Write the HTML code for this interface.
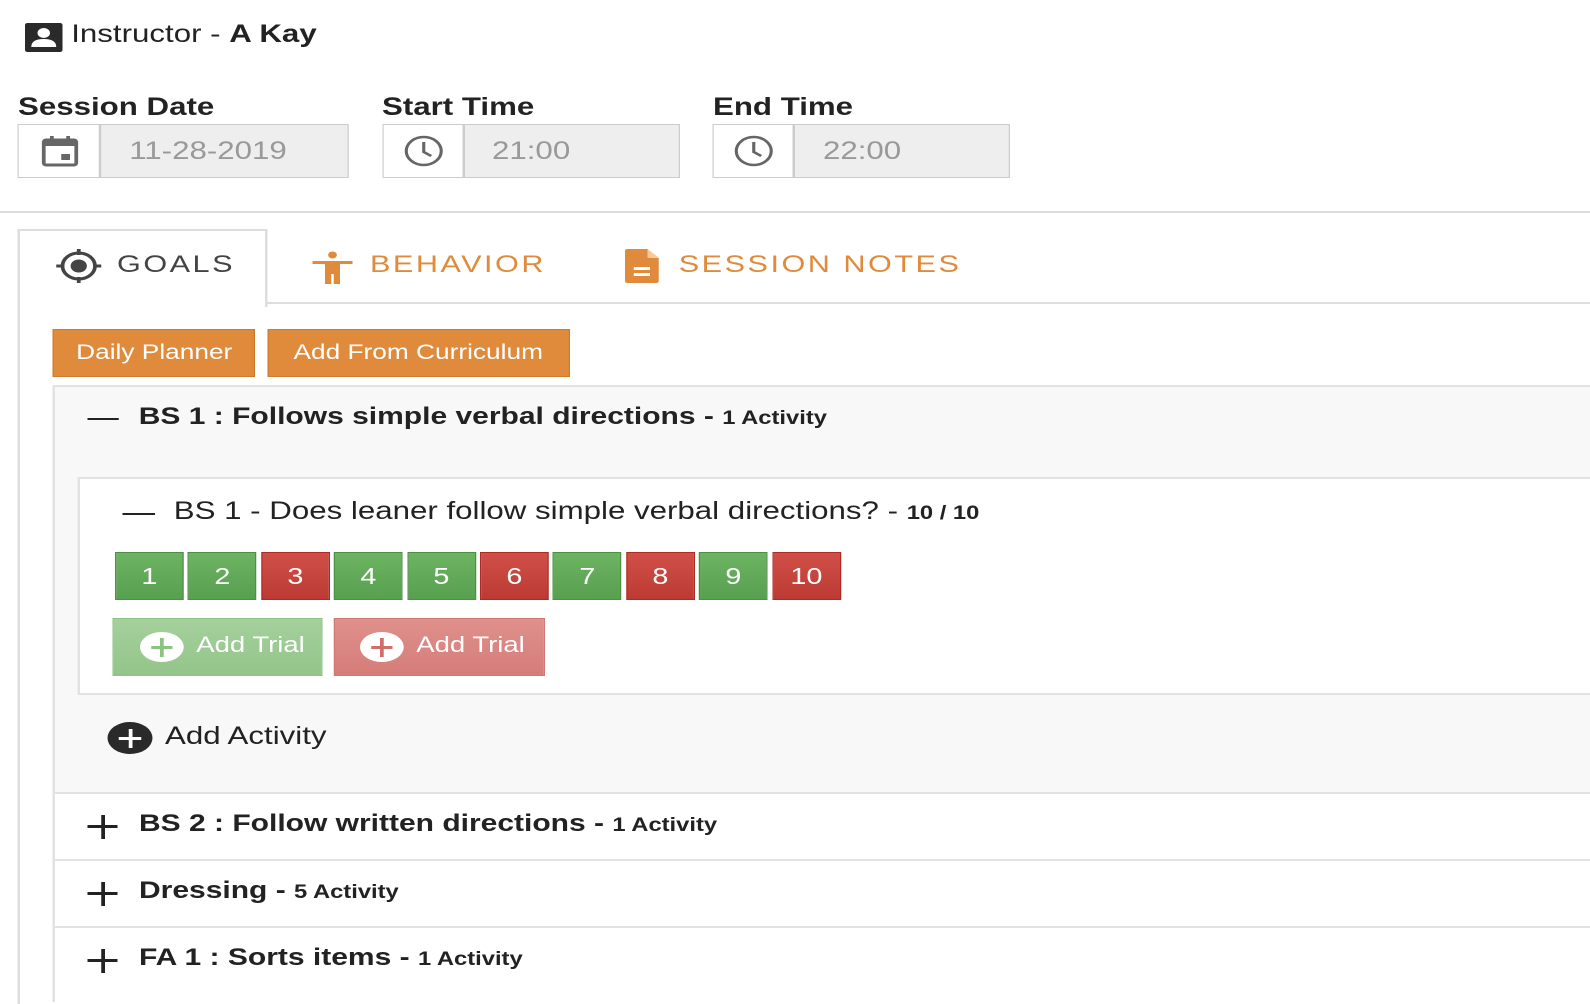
<!DOCTYPE html>
<html><head><meta charset="utf-8"><style>
html,body{margin:0;padding:0;background:#fff;overflow:hidden;width:1590px;height:1000px}
#w{position:absolute;left:0;top:0;width:1272px;height:1000px;transform:scaleX(1.25);transform-origin:0 0;font-family:"Liberation Sans",Arial,sans-serif;color:#222}
.a{position:absolute}
.lbl{font-weight:bold;font-size:25px;top:93px}
.inp{position:absolute;top:124px;height:52px;border:1px solid #ccc;background:#eee}
.inp .ic{position:absolute;left:0;top:0;bottom:0;background:#fff;border-right:2px solid #ccc}
.inp .v{position:absolute;top:12px;font-size:25px;color:#999}
.tab{font-size:24.5px;letter-spacing:2px;top:251px}
.btn{position:absolute;top:329px;height:46px;background:#e08b3c;border:1px solid #d07a2c;color:#fff;font-size:21px;line-height:46px;text-align:center}
.t{position:absolute;top:552px;width:53px;height:46px;color:#fff;font-size:23px;line-height:46px;text-align:center}
.g{background:linear-gradient(#6db462,#57a050);border:1px solid #4a9143}
.r{background:linear-gradient(#d05048,#bc3a33);border:1px solid #b02a24}
.row{position:absolute;left:42.4px;right:0;border-top:2px solid #e2e2e2;height:65px;background:#fff}
.row .ph{position:absolute;left:28px;top:31px;width:24px;height:3px;background:#222}
.row .pv{position:absolute;left:38.5px;top:21px;width:3px;height:24px;background:#222}
.row .tx{position:absolute;left:68.8px;top:16px;font-size:24px;font-weight:bold}
small{font-size:19px}
</style></head><body><div id="w">
<svg class="a" style="left:19px;top:22px" width="32" height="31" viewBox="0 0 32 31"><rect x="1" y="1" width="30" height="29" rx="2" fill="#2a2a2a"/><circle cx="16" cy="11" r="5" fill="#fff"/><path d="M6 25 Q6 17 16 17 Q26 17 26 25 Z" fill="#fff"/></svg>
<div class="a" style="left:57px;top:20px;font-size:25px">Instructor - <b>A Kay</b></div>

<div class="a lbl" style="left:14.4px">Session Date</div>
<div class="a lbl" style="left:305.6px">Start Time</div>
<div class="a lbl" style="left:570.4px">End Time</div>

<div class="inp" style="left:14.4px;width:263px"><div class="ic" style="width:64px"><svg style="position:absolute;left:18px;top:10px" width="30" height="32" viewBox="0 0 30 32"><rect x="2" y="5" width="26" height="25" rx="2" fill="none" stroke="#666" stroke-width="3"/><rect x="2" y="5" width="26" height="6" fill="#666"/><rect x="7" y="1" width="3" height="6" fill="#666"/><rect x="20" y="1" width="3" height="6" fill="#666"/><rect x="16" y="19" width="7" height="6" fill="#666"/></svg></div><div class="v" style="left:88px">11-28-2019</div></div>
<div class="inp" style="left:305.6px;width:236px"><div class="ic" style="width:63px"><svg style="position:absolute;left:14px;top:10px" width="36" height="32" viewBox="0 0 36 32"><circle cx="18" cy="16" r="14" fill="none" stroke="#666" stroke-width="2.5"/><path d="M18 7 V17 L24 21" fill="none" stroke="#666" stroke-width="2.5"/></svg></div><div class="v" style="left:87px">21:00</div></div>
<div class="inp" style="left:570.4px;width:236px"><div class="ic" style="width:63px"><svg style="position:absolute;left:14px;top:10px" width="36" height="32" viewBox="0 0 36 32"><circle cx="18" cy="16" r="14" fill="none" stroke="#666" stroke-width="2.5"/><path d="M18 7 V17 L24 21" fill="none" stroke="#666" stroke-width="2.5"/></svg></div><div class="v" style="left:87px">22:00</div></div>

<div class="a" style="left:0;right:0;top:211px;border-top:2px solid #ddd"></div>

<div class="a" style="left:14.4px;right:0;top:302px;height:700px;border-left:2px solid #ddd;border-top:2px solid #ddd"></div>
<div class="a" style="left:14.4px;top:229px;width:196px;height:76px;border:2px solid #ddd;border-bottom:none;background:#fff"></div>
<svg class="a" style="left:44px;top:248px" width="38" height="36" viewBox="0 0 38 36"><circle cx="19" cy="18" r="13" fill="none" stroke="#444" stroke-width="3"/><circle cx="19" cy="18" r="6.5" fill="#444"/><path d="M19 1v6M19 29v6M1 18h6M31 18h6" stroke="#444" stroke-width="3"/></svg>
<div class="a tab" style="left:93.6px;color:#444">GOALS</div>
<svg class="a" style="left:250px;top:251px" width="32" height="34" viewBox="0 0 32 34"><circle cx="16" cy="4" r="3.5" fill="#e08b3c"/><rect x="0" y="10" width="32" height="3" fill="#e08b3c"/><rect x="10" y="10" width="12" height="13" fill="#e08b3c"/><rect x="10" y="22" width="5" height="11" fill="#e08b3c"/><rect x="17" y="22" width="5" height="11" fill="#e08b3c"/></svg>
<div class="a tab" style="left:296px;color:#e08b3c">BEHAVIOR</div>
<svg class="a" style="left:499px;top:248px" width="29" height="36" viewBox="0 0 29 36"><path d="M3 1 H19 L28 10 V33 Q28 35 26 35 H3 Q1 35 1 33 V3 Q1 1 3 1Z" fill="#e08b3c"/><path d="M19 1 V10 H28" fill="#f5c99a"/><rect x="8" y="19" width="13" height="3" fill="#fff"/><rect x="8" y="25" width="13" height="3" fill="#fff"/></svg>
<div class="a tab" style="left:543px;color:#e08b3c">SESSION NOTES</div>

<div class="btn" style="left:42.4px;width:160px">Daily Planner</div>
<div class="btn" style="left:213.6px;width:240px">Add From Curriculum</div>

<div class="a" style="left:42.4px;right:0;top:385px;height:407px;background:#f8f8f8;border:2px solid #e2e2e2;border-right:none"></div>
<div class="a" style="left:70px;top:418px;width:25px;height:2px;background:#222"></div>
<div class="a" style="left:111px;top:403px;font-size:24px;font-weight:bold">BS 1 : Follows simple verbal directions - <small>1 Activity</small></div>

<div class="a" style="left:62.4px;right:0;top:477px;height:214px;background:#fff;border:2px solid #e2e2e2;border-right:none"></div>
<div class="a" style="left:98px;top:513px;width:26px;height:2px;background:#222"></div>
<div class="a" style="left:139px;top:497px;font-size:25px">BS 1 - Does leaner follow simple verbal directions? - <b><small>10 / 10</small></b></div>

<div class="t g" style="left:92px">1</div>
<div class="t g" style="left:150.4px">2</div>
<div class="t r" style="left:208.8px">3</div>
<div class="t g" style="left:267.2px">4</div>
<div class="t g" style="left:325.6px">5</div>
<div class="t r" style="left:384px">6</div>
<div class="t g" style="left:442.4px">7</div>
<div class="t r" style="left:500.8px">8</div>
<div class="t g" style="left:559.2px">9</div>
<div class="t r" style="left:617.6px">10</div>

<div class="a" style="left:90.4px;top:618px;width:166px;height:56px;background:linear-gradient(#a5d09c,#93c58a);border:1px solid #8fc286"></div>
<div class="a" style="left:112px;top:632px;width:35px;height:30px;border-radius:50%;background:#fff"></div>
<div class="a" style="left:121px;top:646px;width:17px;height:3px;background:#8cc383"></div>
<div class="a" style="left:128px;top:638px;width:3px;height:19px;background:#8cc383"></div>
<div class="a" style="left:157px;top:632px;color:#fff;font-size:22px">Add Trial</div>
<div class="a" style="left:267.2px;top:618px;width:167px;height:56px;background:linear-gradient(#e0908c,#d47d79);border:1px solid #d27773"></div>
<div class="a" style="left:288px;top:632px;width:35px;height:30px;border-radius:50%;background:#fff"></div>
<div class="a" style="left:297px;top:646px;width:17px;height:3px;background:#d26e6a"></div>
<div class="a" style="left:304px;top:638px;width:3px;height:19px;background:#d26e6a"></div>
<div class="a" style="left:333px;top:632px;color:#fff;font-size:22px">Add Trial</div>

<div class="a" style="left:86px;top:722px;width:36px;height:32px;border-radius:50%;background:#2a2a2a"></div>
<div class="a" style="left:95px;top:737px;width:18px;height:3px;background:#fff"></div>
<div class="a" style="left:102.5px;top:729px;width:3px;height:19px;background:#fff"></div>
<div class="a" style="left:132px;top:722px;font-size:25px">Add Activity</div>

<div class="row" style="top:792px"><div class="ph"></div><div class="pv"></div><div class="tx">BS 2 : Follow written directions - <small>1 Activity</small></div></div>
<div class="row" style="top:859px"><div class="ph"></div><div class="pv"></div><div class="tx">Dressing - <small>5 Activity</small></div></div>
<div class="row" style="top:926px"><div class="ph"></div><div class="pv"></div><div class="tx">FA 1 : Sorts items - <small>1 Activity</small></div></div>
<div class="a" style="left:42.4px;top:792px;height:210px;border-left:2px solid #e2e2e2"></div>
</div></body></html>
